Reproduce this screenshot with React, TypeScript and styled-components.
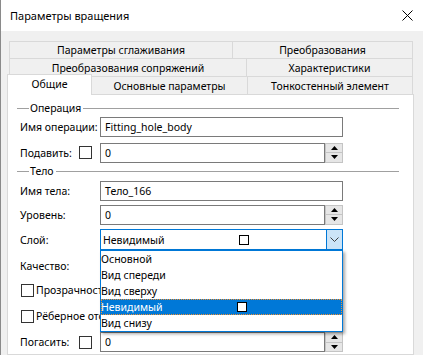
import React from 'react';
import styled, { createGlobalStyle } from 'styled-components';

const Global = createGlobalStyle`
  html, body { margin: 0; padding: 0; background: #f0f0f0; }
  body { font-family: "Noto Sans", sans-serif; font-size: 10.5px; line-height: 14px; color: #000; }
  * { box-sizing: border-box; }
`;

const Dialog = styled.div`
  width: 423px;
  height: 355px;
  overflow: hidden;
  background: #f0f0f0;
  border-left: 1px solid #8a8a8a;
  display: flex;
  flex-direction: column;
`;

const TitleBar = styled.div`
  height: 31px;
  flex: none;
  background: #fff;
  display: flex;
  align-items: center;
  justify-content: space-between;
  padding: 0 10px 0 9px;
  font-size: 11px;
`;

const Body = styled.div`
  flex: 1;
  display: flex;
  flex-direction: column;
  padding: 10px 9px 0 6px;
`;

const TabRow = styled.div<{ $h: number }>`
  display: flex;
  height: ${p => p.$h}px;
  padding: 0 1px 0 2px;
  flex: none;
`;

const Tab = styled.div<{ $w: number; $first?: boolean }>`
  width: ${p => p.$w}px;
  flex: none;
  margin-left: ${p => (p.$first ? 0 : -1)}px;
  border: 1px solid #d9d9d9;
  border-bottom: none;
  background: #f0f0f0;
  display: flex;
  align-items: center;
  justify-content: center;
  white-space: nowrap;
`;

const ActiveTab = styled.div<{ $w: number }>`
  width: ${p => p.$w}px;
  flex: none;
  height: 21px;
  margin: -2px 0 0 -2px;
  border: 1px solid #d9d9d9;
  border-bottom: none;
  background: #fff;
  display: flex;
  align-items: flex-start;
  justify-content: center;
  padding-top: 2px;
  position: relative;
  z-index: 2;
`;

const Panel = styled.div`
  flex: 1;
  background: #fff;
  border: 1px solid #d9d9d9;
  padding: 7px 14px 0 9px;
`;

const GroupHeader = styled.div`
  height: 12px;
  display: flex;
  align-items: center;
  &::before {
    content: '';
    width: 12px;
    height: 1px;
    background: #a0a0a0;
  }
  &::after {
    content: '';
    flex: 1;
    height: 1px;
    background: #a0a0a0;
  }
`;

const GroupTitle = styled.span`
  padding: 0 2px 0 1px;
  line-height: 12px;
`;

const Row = styled.div<{ $h: number }>`
  height: ${p => p.$h}px;
  display: flex;
  align-items: center;
  padding-left: 3px;
  white-space: nowrap;
`;

const Label = styled.div`
  width: 80px;
  flex: none;
  display: flex;
  align-items: center;
`;

const Check = styled.span`
  width: 13px;
  height: 13px;
  border: 1px solid #333;
  background: #fff;
  flex: none;
`;

const LabelCheck = styled(Check)`
  margin-left: auto;
  margin-right: 8px;
`;

const SideCheck = styled(Check)`
  margin: 0 2px 0 1px;
`;

const CheckText = styled.span`
  max-width: 64px;
  overflow: hidden;
`;

const TextBox = styled.div`
  width: 243px;
  height: 20px;
  border: 1px solid #7a7a7a;
  background: #fff;
  display: flex;
  align-items: center;
  padding-left: 4px;
`;

const SpinWrap = styled.div`
  width: 243px;
  height: 20px;
  display: flex;
`;

const SpinText = styled(TextBox)`
  width: auto;
  flex: 1;
`;

const Spin = styled.div`
  width: 18px;
  flex: none;
  border: 1px solid #c4c4c4;
  background: #e6e6e6;
  display: flex;
  flex-direction: column;
`;

const SpinBtn = styled.div<{ $down?: boolean }>`
  flex: 1;
  display: flex;
  align-items: center;
  justify-content: center;
  border-top: ${p => (p.$down ? '1px solid #c4c4c4' : 'none')};
`;

const ComboWrap = styled.div`
  position: relative;
  width: 243px;
  height: 21px;
  flex: none;
`;

const Combo = styled.div`
  height: 21px;
  border: 1px solid #0078d7;
  background: #fff;
  display: flex;
`;

const ComboValue = styled.div`
  flex: 1;
  display: grid;
  grid-template-columns: 136px 10px;
  align-items: center;
  padding-left: 2px;
`;

const ComboBtn = styled.div`
  width: 16px;
  flex: none;
  background: #cce4f7;
  border-left: 1px solid #0078d7;
  display: flex;
  align-items: center;
  justify-content: center;
`;

const Swatch = styled.span`
  width: 10px;
  height: 10px;
  border: 1px solid #000;
  background: #fff;
`;

const List = styled.div`
  position: absolute;
  top: 100%;
  left: 0;
  width: 243px;
  border: 1px solid #0078d7;
  background: #fff;
  box-shadow: 2px 2px 3px rgba(0, 0, 0, 0.35);
  z-index: 5;
`;

const Item = styled.div<{ $sel?: boolean }>`
  height: 16px;
  line-height: 16px;
  display: grid;
  grid-template-columns: 136px 10px;
  align-items: center;
  background: ${p => (p.$sel ? '#0078d7' : '#fff')};
  color: ${p => (p.$sel ? '#fff' : '#000')};
  outline: ${p => (p.$sel ? '1px dotted #f09030' : 'none')};
  outline-offset: -1px;
`;

const Up = () => (
  <svg width="7" height="4" viewBox="0 0 7 4"><path d="M3.5 0L7 4H0z" fill="#000" /></svg>
);
const Down = () => (
  <svg width="7" height="4" viewBox="0 0 7 4"><path d="M0 0h7L3.5 4z" fill="#000" /></svg>
);

const SpinInput = ({ value }: { value: string }) => (
  <SpinWrap>
    <SpinText>{value}</SpinText>
    <Spin>
      <SpinBtn><Up /></SpinBtn>
      <SpinBtn $down><Down /></SpinBtn>
    </Spin>
  </SpinWrap>
);

const items = ['Основной', 'Вид спереди', 'Вид сверху', 'Невидимый', 'Вид снизу'];

export default function App() {
  return (
    <>
      <Global />
      <Dialog>
        <TitleBar>
          <span>Параметры вращения</span>
          <svg width="11" height="11" viewBox="0 0 11 11">
            <path d="M0.5 0.5L10.5 10.5M10.5 0.5L0.5 10.5" stroke="#000" strokeWidth="1" />
          </svg>
        </TitleBar>
        <Body>
          <TabRow $h={17}>
            <Tab $w={224} $first>Параметры сглаживания</Tab>
            <Tab $w={181}>Преобразования</Tab>
          </TabRow>
          <TabRow $h={18}>
            <Tab $w={238} $first>Преобразования сопряжений</Tab>
            <Tab $w={167}>Характеристики</Tab>
          </TabRow>
          <TabRow $h={18}>
            <ActiveTab $w={85}>Общие</ActiveTab>
            <Tab $w={157}>Основные параметры</Tab>
            <Tab $w={166}>Тонкостенный элемент</Tab>
          </TabRow>
          <Panel>
            <GroupHeader><GroupTitle>Операция</GroupTitle></GroupHeader>
            <Row $h={26}>
              <Label>Имя операции:</Label>
              <TextBox>Fitting_hole_body</TextBox>
            </Row>
            <Row $h={25}>
              <Label>Подавить:<LabelCheck /></Label>
              <SpinInput value="0" />
            </Row>
            <GroupHeader><GroupTitle>Тело</GroupTitle></GroupHeader>
            <Row $h={27}>
              <Label>Имя тела:</Label>
              <TextBox>Тело_166</TextBox>
            </Row>
            <Row $h={21}>
              <Label>Уровень:</Label>
              <SpinInput value="0" />
            </Row>
            <Row $h={29}>
              <Label>Слой:</Label>
              <ComboWrap>
                <Combo>
                  <ComboValue><span>Невидимый</span><Swatch /></ComboValue>
                  <ComboBtn>
                    <svg width="9" height="5" viewBox="0 0 9 5">
                      <path d="M0.5 0.5L4.5 4.5L8.5 0.5" stroke="#404040" fill="none" strokeWidth="1" />
                    </svg>
                  </ComboBtn>
                </Combo>
                <List>
                  {items.map((t, i) => (
                    <Item key={i} $sel={i === 3}>
                      <span>{t}</span>
                      {t === 'Невидимый' ? <Swatch /> : <span />}
                    </Item>
                  ))}
                </List>
              </ComboWrap>
            </Row>
            <Row $h={24}>
              <Label>Качество:</Label>
            </Row>
            <Row $h={24}>
              <SideCheck /><CheckText>Прозрачность</CheckText>
            </Row>
            <Row $h={28}>
              <SideCheck /><CheckText>Рёберное отображение</CheckText>
            </Row>
            <Row $h={24}>
              <Label>Погасить:<LabelCheck /></Label>
              <SpinInput value="0" />
            </Row>
          </Panel>
        </Body>
      </Dialog>
    </>
  );
}
